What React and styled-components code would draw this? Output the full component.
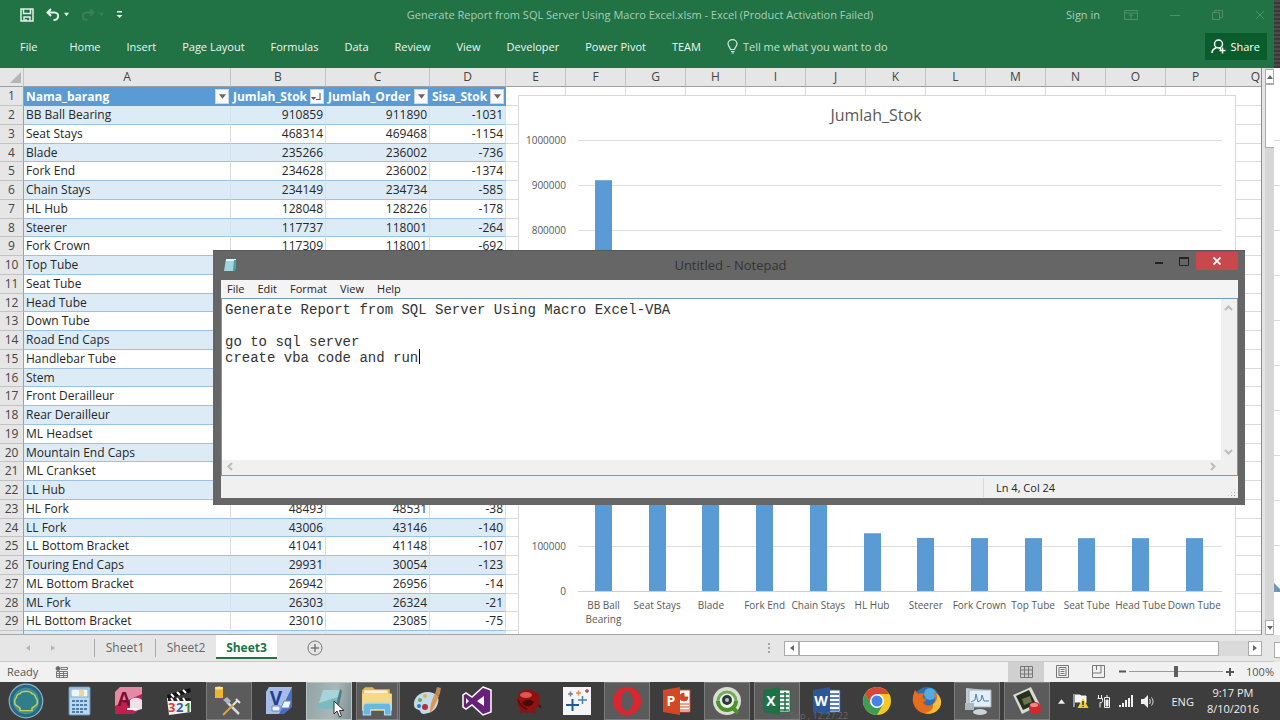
import React from "react";
import styled, { createGlobalStyle, css } from "styled-components";

const GlobalStyle = createGlobalStyle`
  * {
    box-sizing: border-box;
  }
  body {
    margin: 0;
    font-family: "Open Sans", "Noto Sans", sans-serif;
    font-size: 12px;
    color: #262626;
    overflow: hidden;
  }
  button, input, textarea {
    margin: 0;
    padding: 0;
    border: none;
    background: none;
    font: inherit;
    color: inherit;
  }
  a {
    color: inherit;
    text-decoration: none;
  }
  svg {
    display: block;
  }
`;

const Screen = styled.div`
  display: flex;
  flex-direction: column;
  height: 100vh;
`;

const Desktop = styled.div`
  flex: 1;
  min-height: 0;
  display: grid;
  grid-template-columns: minmax(0, 1fr) 6px;
  position: relative;
`;

const Excel = styled.div`
  display: flex;
  flex-direction: column;
  min-height: 0;
`;

// title bar
const TitleBar = styled.header`
  display: grid;
  grid-template-columns: 1fr auto 1fr;
  align-items: center;
  height: 30px;
  padding: 0 0 1px 6px;
  background: #217346;
  color: #a9cdb8;
  font-size: 11px;
`;

const QuickAccess = styled.div`
  display: flex;
  align-items: center;
  gap: 12px;
  padding-left: 14px;
`;

const WindowTools = styled.div`
  display: flex;
  align-items: center;
  justify-content: flex-end;
  gap: 32px;
  padding-right: 9px;
`;

const SignIn = styled.a`
  margin-right: -8px;
`;

const IconButton = styled.button`
  display: flex;
  align-items: center;
  gap: 4px;
`;

const Ribbon = styled.nav`
  display: flex;
  align-items: center;
  gap: 26px;
  height: 38px;
  padding: 0 7px 6px 20px;
  background: #217346;
  color: #eef6f1;
  font-size: 11px;
`;

const FileTab = styled.a`
  margin-right: 6px;
`;

const TellMe = styled.button`
  display: flex;
  align-items: center;
  gap: 5px;
  color: #c6e0d1;
`;

const ShareButton = styled.button`
  display: flex;
  align-items: center;
  gap: 4px;
  height: 27px;
  margin-left: auto;
  padding: 0 7px 0 6px;
  background: #0a5c2c;
  color: #fff;
`;

// sheet
const SheetRow = styled.div`
  flex: 1;
  min-height: 0;
  display: flex;
  background: #e6e6e6;
`;

const SheetView = styled.div`
  flex: 1;
  min-width: 0;
  position: relative;
  overflow: hidden;
  background: #fff;
  border-right: 1px solid #8d8d8d;
  border-bottom: 1px solid #a6a6a6;
`;

const SheetTable = styled.table`
  table-layout: fixed;
  width: 1286px;
  border-collapse: separate;
  border-spacing: 0;
  font-size: 12px;
  line-height: 16px;
  th, td {
    padding: 0 2px;
    overflow: hidden;
    white-space: nowrap;
  }
`;

const ColHead = styled.th`
  height: 19px;
  background: #e6e6e6;
  border-right: 1px solid #c3c3c3;
  border-bottom: 1px solid #9f9f9f;
  color: #444;
  font-weight: 400;
`;

const RowHead = styled.th`
  background: #e6e6e6;
  border-right: 1px solid #9f9f9f;
  border-bottom: 1px solid #c3c3c3;
  color: #444;
  font-weight: 400;
  text-align: center;
`;

const SheetLine = styled.tr`
  height: 19px;
  &:nth-child(4n) {
    height: 18px;
  }
`;

const FieldHead = styled.th`
  background: #5b9bd5;
  border-right: 1px solid #5b9bd5;
  color: #fff;
  font-weight: 700;
  text-align: left;
`;

const FieldInner = styled.div`
  display: flex;
  align-items: center;
  justify-content: space-between;
  margin-right: -1px;
`;

const FilterButton = styled.button`
  flex: none;
  display: flex;
  align-items: center;
  justify-content: center;
  width: 14px;
  height: 15px;
  background: #fafafa;
  border: 1px solid #d0d7de;
`;

const DataCell = styled.td`
  background: ${(p) => (p.$band ? "#ddebf7" : "#fff")};
  border-right: 1px solid ${(p) => (p.$band ? "#d5e3f0" : "#dcdcdc")};
  border-bottom: 1px solid #9bc2e6;
  text-align: ${(p) => (p.$num ? "right" : "left")};
`;

const BlankCell = styled.td`
  border-right: 1px solid #dadada;
  border-bottom: 1px solid #dadada;
`;

const ChartBox = styled.figure`
  position: absolute;
  left: 518px;
  top: 27px;
  margin: 0;
  background: #fff;
  border: 1px solid #d9d9d9;
`;

const VScroll = styled.div`
  width: 12px;
  padding: 1px 0 0 3px;
  display: flex;
  flex-direction: column;
  background: linear-gradient(90deg, #e4e4e4 3px, #d6d6d6 3px);
`;

const ScrollButton = styled.button`
  display: flex;
  align-items: center;
  justify-content: center;
  width: ${(p) => p.$w}px;
  height: 15px;
  background: #fff;
  border: 1px solid #ababab;
`;

const VThumb = styled.div`
  height: 64px;
  background: #fff;
  border: 1px solid #ababab;
  border-right: none;
`;

// sheet tabs
const TabBar = styled.div`
  display: flex;
  align-items: center;
  height: 27px;
  background: #e6e6e6;
  border-bottom: 1px solid #c8c8c8;
  color: #666;
`;

const TabArrows = styled.div`
  display: flex;
  justify-content: space-between;
  width: 94px;
  padding: 0 38px 0 25px;
`;

const SheetTab = styled.button`
  width: 61px;
  height: 18px;
  border-left: 1px solid #ababab;
  line-height: 18px;
  ${(p) =>
    p.$active &&
    css`
      align-self: flex-start;
      height: 24px;
      padding-top: 3px;
      background: #fff;
      border-left: none;
      border-bottom: 2px solid #217346;
      color: #217346;
      font-weight: 700;
    `}
`;

const AddSheet = styled.button`
  margin-left: 30px;
`;

const HScroll = styled.div`
  display: flex;
  align-items: center;
  width: 494px;
  margin: 0 12px 0 auto;
`;

const HThumb = styled.div`
  width: 420px;
  height: 15px;
  background: #fff;
  border: 1px solid #ababab;
`;

const HTrack = styled.div`
  flex: 1;
  height: 15px;
  background: #dadada;
`;

const Grip = styled.div`
  width: 2px;
  height: 11px;
  margin-right: 14px;
  background: repeating-linear-gradient(#a6a6a6 0 2px, transparent 2px 4px);
`;

const StatusBar = styled.footer`
  display: flex;
  align-items: center;
  gap: 17px;
  height: 20px;
  padding: 0 0 1px 7px;
  background: #f1f1f1;
  color: #555;
  font-size: 11px;
`;

const ViewButton = styled.button`
  display: flex;
  align-items: center;
  justify-content: center;
  width: 36px;
  height: 20px;
  background: ${(p) => (p.$active ? "#d0d0d0" : "transparent")};
`;

const ViewGroup = styled.div`
  display: flex;
  margin-left: auto;
`;

const ZoomGroup = styled.div`
  display: flex;
  align-items: center;
  gap: 3px;
  margin-left: -14px;
  span {
    margin-left: 9px;
  }
`;

const ZoomSlider = styled.input`
  appearance: none;
  width: 94px;
  height: 12px;
  background: linear-gradient(#9a9a9a, #9a9a9a) center / 100% 1px no-repeat;
  &::-webkit-slider-thumb {
    appearance: none;
    width: 4px;
    height: 11px;
    background: #5e5e5e;
  }
`;

// edge of the window that lies behind
const Edge = styled.div`
  display: flex;
  flex-direction: column;
  background: #fff;
`;

const EdgeTop = styled.div`
  height: 68px;
  background: repeating-linear-gradient(#4d4a4a 0 2px, #3b3939 2px 4px);
`;

const EdgeGrid = styled.div`
  flex: 1;
  display: flex;
  align-items: flex-end;
  margin-top: 28px;
  padding-bottom: 43px;
  background: repeating-linear-gradient(transparent 0 44px, #d9d9d9 44px 45px);
`;

const EdgeFoot = styled.div`
  height: 47px;
  padding-top: 7px;
  background: linear-gradient(#e6e6e6 27px, #f1f1f1 27px);
  &::before {
    content: "";
    display: block;
    height: 14px;
    background: #fff;
    border: 1px solid #ababab;
    border-right: none;
  }
`;

// notepad
const Notepad = styled.section`
  position: absolute;
  left: 213px;
  top: 250px;
  width: 1032px;
  height: 255px;
  display: flex;
  flex-direction: column;
  padding: 1px 7px 7px 8px;
  background: #666;
  border-top: 1px solid #585858;
`;

const NoteTitle = styled.div`
  display: grid;
  grid-template-columns: 1fr auto 1fr;
  align-items: center;
  height: 28px;
  padding: 0 0 2px 2px;
  color: #333;
  font-size: 13px;
`;

const NoteButtons = styled.div`
  display: flex;
  align-self: flex-start;
  align-items: center;
  justify-content: flex-end;
  gap: 7px;
`;

const Minimize = styled.button`
  margin-right: 9px;
`;

const CloseButton = styled.button`
  display: flex;
  align-items: center;
  justify-content: center;
  width: 42px;
  height: 18px;
  background: #c8494d;
`;

const NoteMenu = styled.nav`
  display: flex;
  align-items: center;
  gap: 13px;
  height: 18px;
  padding: 0 0 2px 6px;
  background: #f4f4f4;
  font-size: 11px;
`;

const NoteBody = styled.div`
  flex: 1;
  min-height: 0;
  display: grid;
  grid-template-columns: 1fr 16px;
  grid-template-rows: 1fr 15px;
  position: relative;
  border: 1px solid #6c9dc6;
  background: #f0f0f0;
`;

const NoteText = styled.textarea`
  resize: none;
  outline: none;
  overflow: hidden;
  padding: 3px 3px;
  background: #fff;
  color: #333;
  font-family: "Liberation Mono", monospace;
  font-size: 14px;
  line-height: 16px;
`;

const Caret = styled.div`
  position: absolute;
  left: calc(4px + 23ch);
  top: 50px;
  width: 1px;
  height: 15px;
  background: #000;
  font-family: "Liberation Mono", monospace;
  font-size: 14px;
`;

const NoteScroll = styled.div`
  display: flex;
  flex-direction: ${(p) => (p.$vertical ? "column" : "row")};
  align-items: center;
  justify-content: space-between;
  padding: ${(p) => (p.$vertical ? "5px 2px 4px 0" : "0 4px 2px")};
`;

const NoteStatus = styled.div`
  display: flex;
  justify-content: flex-end;
  align-items: center;
  height: 22px;
  background: #f0f0f0;
  font-size: 11px;
  span {
    width: 255px;
    padding: 2px 0 2px 12px;
    border-left: 1px solid #d9d9d9;
  }
`;

const SizeGrip = styled.div`
  align-self: flex-end;
  width: 9px;
  height: 9px;
  margin: 0 2px 1px -11px;
  background: radial-gradient(#a5a5a5 1px, transparent 1px) 0 0 / 3px 3px;
  clip-path: polygon(100% 0, 100% 100%, 0 100%);
`;

// taskbar
const Taskbar = styled.footer`
  display: flex;
  align-items: center;
  gap: 4px;
  height: 38px;
  padding: 0 3px;
  position: relative;
  background: #3d3d3d;
  color: #f0f0f0;
  font-size: 11px;
`;

const TaskButton = styled.button`
  display: flex;
  align-items: center;
  justify-content: center;
  flex: none;
  width: 46px;
  height: 38px;
  ${(p) => p.$start && "margin-right: 3px;"}
  ${(p) => p.$open && "background: #5b5b5b; border: 1px solid #7c7c7c;"}
  ${(p) => p.$stack && "width: 44px; border-right: 3px double #7c7c7c;"}
  ${(p) =>
    p.$focus &&
    "background: linear-gradient(100deg, #93a4a6, #a9b7b8 60%, #7f9092); border: 1px solid #b9c4c5;"}
`;

const Pointer = styled.svg`
  position: absolute;
  left: 333px;
  bottom: 2px;
`;

const Ghost = styled.span`
  position: absolute;
  left: 790px;
  bottom: 0;
  color: #666;
  font-size: 9px;
  line-height: 9px;
`;

const Tray = styled.div`
  display: flex;
  align-items: center;
  gap: 8px;
  margin: 0 18px 0 auto;
`;

const Language = styled.span`
  margin: 0 5px 0 8px;
`;

const Clock = styled.time`
  display: flex;
  flex-direction: column;
  align-items: center;
  line-height: 16px;
`;

const rows = [
  ["BB Ball Bearing", "910859", "911890", "-1031"],
  ["Seat Stays", "468314", "469468", "-1154"],
  ["Blade", "235266", "236002", "-736"],
  ["Fork End", "234628", "236002", "-1374"],
  ["Chain Stays", "234149", "234734", "-585"],
  ["HL Hub", "128048", "128226", "-178"],
  ["Steerer", "117737", "118001", "-264"],
  ["Fork Crown", "117309", "118001", "-692"],
  ["Top Tube"],
  ["Seat Tube"],
  ["Head Tube"],
  ["Down Tube"],
  ["Road End Caps"],
  ["Handlebar Tube"],
  ["Stem"],
  ["Front Derailleur"],
  ["Rear Derailleur"],
  ["ML Headset"],
  ["Mountain End Caps"],
  ["ML Crankset"],
  ["LL Hub"],
  ["HL Fork", "48493", "48531", "-38"],
  ["LL Fork", "43006", "43146", "-140"],
  ["LL Bottom Bracket", "41041", "41148", "-107"],
  ["Touring End Caps", "29931", "30054", "-123"],
  ["ML Bottom Bracket", "26942", "26956", "-14"],
  ["ML Fork", "26303", "26324", "-21"],
  ["HL Bottom Bracket", "23010", "23085", "-75"],
  [""],
];

const letters = "ABCDEFGHIJKLMNOPQ".split("");
const extra = letters.slice(4);
const widths = [24, 207, 95, 104, 76, ...extra.map(() => 60)];
const fields = ["Nama_barang", "Jumlah_Stok", "Jumlah_Order", "Sisa_Stok"];

const bars = [
  [["BB Ball", "Bearing"], 910859],
  [["Seat Stays"], 468314],
  [["Blade"], 235266],
  [["Fork End"], 234628],
  [["Chain Stays"], 234149],
  [["HL Hub"], 128048],
  [["Steerer"], 117737],
  [["Fork Crown"], 117309],
  [["Top Tube"], 117200],
  [["Seat Tube"], 117200],
  [["Head Tube"], 117200],
  [["Down Tube"], 117200],
];

const Arrow = ({ dir = "down", color = "#666", size = 6 }) => {
  const turn = { down: 0, left: 90, up: 180, right: 270 }[dir];
  return (
    <svg width={size} height={size} viewBox="0 0 6 6">
      <path d="M0 1h6L3 5z" fill={color} transform={`rotate(${turn} 3 3)`} />
    </svg>
  );
};

const Chevron = ({ dir }) => {
  const turn = { down: 0, left: 90, up: 180, right: 270 }[dir];
  return (
    <svg width="9" height="9" viewBox="0 0 9 9">
      <path
        d="M1 3l3.500 3.500L8 3"
        fill="none"
        stroke="#bcbcbc"
        strokeWidth="2"
        transform={`rotate(${turn} 4.500 4.500)`}
      />
    </svg>
  );
};

function Chart() {
  const base = 495;
  const scale = 451 / 1000000;
  const ticks = Array.from({ length: 11 }, (_, i) => i * 100000);
  return (
    <ChartBox>
      <svg width="716" height="560" fontSize="10" fill="#595959">
        <text x="357" y="25" fontSize="16" textAnchor="middle">
          Jumlah_Stok
        </text>
        {ticks.map((t) => (
          <g key={t}>
            <path
              d={`M59 ${Math.round(base - t * scale) + 0.5}H703`}
              stroke={t ? "#dedede" : "#cfcfcf"}
            />
            <text x="47" y={Math.round(base - t * scale) + 4} textAnchor="end">
              {t}
            </text>
          </g>
        ))}
        {bars.map(([label, value], i) => {
          const x = 84.5 + i * 53.7;
          return (
            <g key={label[0]}>
              <rect
                x={Math.round(x - 8.5)}
                y={base - value * scale}
                width="17"
                height={value * scale}
                fill="#5b9bd5"
              />
              {label.map((line, n) => (
                <text key={line} x={x} y={513 + n * 14} textAnchor="middle">
                  {line}
                </text>
              ))}
            </g>
          );
        })}
      </svg>
    </ChartBox>
  );
}

function Sheet() {
  return (
    <SheetView>
      <SheetTable>
        <colgroup>
          {widths.map((w, i) => (
            <col key={i} width={w} />
          ))}
        </colgroup>
        <thead>
          <tr>
            <ColHead>
              <svg width="20" height="14" viewBox="0 0 20 14">
                <path d="M19 2v11H8z" fill="#b5b5b5" />
              </svg>
            </ColHead>
            {letters.map((l) => (
              <ColHead key={l}>{l}</ColHead>
            ))}
          </tr>
        </thead>
        <tbody>
          <SheetLine>
            <RowHead>1</RowHead>
            {fields.map((f, i) => (
              <FieldHead key={f}>
                <FieldInner>
                  {f}
                  <FilterButton aria-label={`Filter ${f}`}>
                    {i === 1 ? (
                      <svg width="12" height="10" viewBox="0 0 12 10">
                        <path d="M0 5h5L2.500 8z" fill="#555" />
                        <path
                          d="M9 1v7M5 7.500h4"
                          stroke="#555"
                          fill="none"
                        />
                      </svg>
                    ) : (
                      <Arrow size={7} />
                    )}
                  </FilterButton>
                </FieldInner>
              </FieldHead>
            ))}
            {extra.map((l) => (
              <BlankCell key={l} />
            ))}
          </SheetLine>
          {rows.map(([name, ...nums], r) => (
            <SheetLine key={r}>
              <RowHead>{name && r + 2}</RowHead>
              <DataCell $band={r % 2 === 0}>{name}</DataCell>
              {[0, 1, 2].map((n) => (
                <DataCell key={n} $num $band={r % 2 === 0}>
                  {nums[n]}
                </DataCell>
              ))}
              {extra.map((l) => (
                <BlankCell key={l} />
              ))}
            </SheetLine>
          ))}
        </tbody>
      </SheetTable>
      <Chart />
    </SheetView>
  );
}

const menus = [
  "Home",
  "Insert",
  "Page Layout",
  "Formulas",
  "Data",
  "Review",
  "View",
  "Developer",
  "Power Pivot",
  "TEAM",
];

function ExcelHeader() {
  return (
    <>
      <TitleBar>
        <QuickAccess>
          <IconButton aria-label="Save">
            <svg width="14" height="14" viewBox="0 0 14 14" fill="none" stroke="#e4f1e9" strokeWidth="1.500">
              <path d="M1 1h12v12H1zM3.500 1v4.500h7V1M4 13V9h6v4M6 11v2" />
            </svg>
          </IconButton>
          <IconButton aria-label="Undo">
            <svg width="14" height="14" viewBox="0 0 14 14" fill="none" stroke="#e4f1e9" strokeWidth="2">
              <path d="M5 1L1.500 4.500 5 8M2 4.500h6.500c5 0 5 7.500-1 7.500" />
            </svg>
            <Arrow color="#e4f1e9" size={5} />
          </IconButton>
          <IconButton aria-label="Redo">
            <svg width="14" height="14" viewBox="0 0 14 14" fill="none" stroke="#3a8159" strokeWidth="2">
              <path d="M9 1l3.500 3.500L9 8M12 4.500H5.500c-5 0-5 7.500 1 7.500" />
            </svg>
            <Arrow color="#3a8159" size={5} />
          </IconButton>
          <IconButton aria-label="Customize">
            <svg width="7" height="8" viewBox="0 0 7 8">
              <path d="M1 0h5v1.500H1zM.5 4h6L3.500 7z" fill="#e4f1e9" />
            </svg>
          </IconButton>
        </QuickAccess>
        <span>
          Generate Report from SQL Server Using Macro Excel.xlsm - Excel
          (Product Activation Failed)
        </span>
        <WindowTools>
          <SignIn href="#signin">Sign in</SignIn>
          <svg width="14" height="10" viewBox="0 0 14 10" fill="none" stroke="#4f9069">
            <path d="M.5.5h13v9H.5zM.5 3h13M7 9V4.500M5 6l2-2 2 2" />
          </svg>
          <svg width="10" height="10" viewBox="0 0 10 10" stroke="#4f9069">
            <path d="M0 5.500h10" />
          </svg>
          <svg width="11" height="10" viewBox="0 0 11 10" fill="none" stroke="#4f9069">
            <path d="M.5 2.500h7v7h-7zM2.500 2.500v-2h8v7h-3" />
          </svg>
          <svg width="10" height="10" viewBox="0 0 10 10" stroke="#4f9069">
            <path d="M1 1l8 8M9 1L1 9" />
          </svg>
        </WindowTools>
      </TitleBar>
      <Ribbon>
        <FileTab href="#File">File</FileTab>
        {menus.map((m) => (
          <a key={m} href={`#${m}`}>
            {m}
          </a>
        ))}
        <TellMe>
          <svg width="11" height="15" viewBox="0 0 11 15" fill="none" stroke="#d6eadf" strokeWidth="1.200">
            <path d="M3.500 10.500C3.500 8.500 1 7.500 1 4.800a4.500 4.200 0 0 1 9 0C10 7.500 7.500 8.500 7.500 10.500zM4 12.500h3.500M4.500 14h2.500" />
          </svg>
          Tell me what you want to do
        </TellMe>
        <ShareButton>
          <svg width="15" height="15" viewBox="0 0 15 15" fill="none" stroke="#fff" strokeWidth="1.500">
            <circle cx="7.500" cy="5" r="4" />
            <path d="M1 14c0-3 2-4.500 4.500-5.500M8.500 9l1.500 1.500M11.500 8.500v6M8.500 11.500h6" />
          </svg>
          Share
        </ShareButton>
      </Ribbon>
    </>
  );
}

function ExcelFooter() {
  return (
    <>
      <TabBar>
        <TabArrows>
          <Arrow dir="left" color="#b8b8b8" />
          <Arrow dir="right" color="#b8b8b8" />
        </TabArrows>
        <SheetTab>Sheet1</SheetTab>
        <SheetTab>Sheet2</SheetTab>
        <SheetTab $active>Sheet3</SheetTab>
        <AddSheet aria-label="New sheet">
          <svg width="16" height="16" viewBox="0 0 16 16" fill="none" stroke="#777">
            <circle cx="8" cy="8" r="7" />
            <path d="M8 4v8M4 8h8" strokeWidth="1.500" />
          </svg>
        </AddSheet>
        <HScroll>
          <Grip />
          <ScrollButton $w={15} aria-label="Scroll left">
            <Arrow dir="left" />
          </ScrollButton>
          <HThumb />
          <HTrack />
          <ScrollButton $w={14} aria-label="Scroll right">
            <Arrow dir="right" />
          </ScrollButton>
        </HScroll>
      </TabBar>
      <StatusBar>
        Ready
        <svg width="13" height="12" viewBox="0 0 13 12" fill="none" stroke="#777">
          <circle cx="3" cy="2.500" r="2" fill="#666" />
          <path d="M6 1.500h6.500v2H6zM1.500 5.500h11v6h-11zM1.500 7.500h11M1.500 9.500h11M4.500 5.500v6M8.500 5.500v6" />
        </svg>
        <ViewGroup>
          <ViewButton $active aria-label="Normal">
            <svg width="13" height="12" viewBox="0 0 13 12" fill="none" stroke="#777">
              <path d="M.5.5h12v11H.5zM.5 4h12M.5 8h12M4.500.5v11M8.500.5v11" />
            </svg>
          </ViewButton>
          <ViewButton aria-label="Page layout">
            <svg width="13" height="13" viewBox="0 0 13 13" fill="none" stroke="#777">
              <path d="M.5.5h12v12H.5zM3 2.500h7v8H3zM4.500 4.500h4M4.500 6.500h4M4.500 8.500h4" />
            </svg>
          </ViewButton>
          <ViewButton aria-label="Page break">
            <svg width="13" height="13" viewBox="0 0 13 13" fill="none" stroke="#777">
              <path d="M.5.5h12v12H.5zM.5 8h8.500V.5M4.500.5V5" />
            </svg>
          </ViewButton>
        </ViewGroup>
        <ZoomGroup>
          <svg width="7" height="7" viewBox="0 0 7 7" stroke="#555" strokeWidth="2">
            <path d="M0 3.500h7" />
          </svg>
          <ZoomSlider type="range" aria-label="Zoom" defaultValue={50} />
          <svg width="8" height="8" viewBox="0 0 8 8" stroke="#555" strokeWidth="2">
            <path d="M0 4h8M4 0v8" />
          </svg>
          <span>100%</span>
        </ZoomGroup>
      </StatusBar>
    </>
  );
}

const note =
  "Generate Report from SQL Server Using Macro Excel-VBA\n\ngo to sql server\ncreate vba code and run";

function NotepadWindow() {
  return (
    <Notepad>
      <NoteTitle>
        <svg width="14" height="14" viewBox="0 0 14 14">
          <path d="M3 1h10l-1 12H1z" fill="#9fd6e0" />
          <path d="M3 1h10v2H3z" fill="#e6f4f6" />
          <path d="M11 2h2l-1 11h-2z" fill="#4f9aa8" />
        </svg>
        <span>Untitled - Notepad</span>
        <NoteButtons>
          <Minimize aria-label="Minimize">
            <svg width="8" height="10" viewBox="0 0 8 10">
              <path d="M0 7h8" stroke="#222" strokeWidth="2" />
            </svg>
          </Minimize>
          <svg width="10" height="9" viewBox="0 0 10 9" fill="none" stroke="#222">
            <path d="M.5 1.500h9v7h-9zM0 .5h10" />
          </svg>
          <CloseButton aria-label="Close">
            <svg width="8" height="8" viewBox="0 0 8 8" stroke="#fff" strokeWidth="1.800">
              <path d="M.5.5l7 7M7.500.5l-7 7" />
            </svg>
          </CloseButton>
        </NoteButtons>
      </NoteTitle>
      <NoteMenu>
        {["File", "Edit", "Format", "View", "Help"].map((m) => (
          <a key={m} href={`#note-${m}`}>
            {m}
          </a>
        ))}
      </NoteMenu>
      <NoteBody>
        <NoteText aria-label="Text" spellCheck={false} defaultValue={note} />
        <NoteScroll $vertical>
          <Chevron dir="up" />
          <Chevron dir="down" />
        </NoteScroll>
        <NoteScroll>
          <Chevron dir="left" />
          <Chevron dir="right" />
        </NoteScroll>
        <Caret />
      </NoteBody>
      <NoteStatus>
        <span>Ln 4, Col 24</span>
        <SizeGrip />
      </NoteStatus>
    </Notepad>
  );
}

const Icon = ({ children, size = 30 }) => (
  <svg width={size} height={size} viewBox="0 0 30 30">
    {children}
  </svg>
);

const OfficeIcon = ({ letter, color, children }) => (
  <Icon>
    <path d="M14 4h14v22H14z" fill="#fff" stroke={color} />
    {children}
    <path d="M1 4l17-3v28L1 26z" fill={color} />
    <text x="9" y="20" fontSize="14" fontWeight="700" fill="#fff" textAnchor="middle">
      {letter}
    </text>
  </Icon>
);

const tasks = [
  {
    name: "Start",
    start: true,
    icon: (
      <Icon size={36}>
        <circle cx="15" cy="15" r="14" fill="#24688a" stroke="#8fb3bd" />
        <circle cx="15" cy="15" r="11" fill="#3f8f8d" />
        <path
          d="M10 23v-2l-4-3c-1-3 0-5 1-6 0-2 2-3 3-3 1-2 3-2 5-2s4 0 5 2c1 0 3 1 3 3 1 1 2 3 1 6l-4 3v2z"
          fill="#2f7f8b"
          stroke="#c8cf5a"
          strokeWidth="1.200"
        />
      </Icon>
    ),
  },
  {
    name: "Calculator",
    icon: (
      <Icon>
        <rect x="5" y="1" width="21" height="28" rx="1" fill="#bcd8ee" stroke="#5f93bd" />
        <rect x="7" y="3" width="17" height="8" fill="#eef6fb" stroke="#7aa9cf" />
        <path d="M15 4h5v6h-5z" fill="#f3d58b" />
        <path
          d="M8 15h3M12 15h3M16 15h3M20 15h3M8 19h3M12 19h3M16 19h3M20 19h3M8 23h3M12 23h3M16 23h3M20 23h3M8 26h3M12 26h3M16 26h3"
          stroke="#4c7fae"
          strokeWidth="2"
        />
      </Icon>
    ),
  },
  {
    name: "Access",
    icon: (
      <Icon>
        <path d="M6 1h22v20l-8 7H1V6z" fill="#c1204f" />
        <path d="M6 1h22v7L1 20V6z" fill="#e58aa6" />
        <text x="10" y="20" fontSize="19" fontWeight="700" fill="#7d0f33" textAnchor="middle">
          A
        </text>
        <path d="M16 14c3-3 9-3 12 0v9l-7 2-5-2z" fill="#f3dfe7" />
        <path d="M13 23h10" stroke="#fff" strokeWidth="2" />
      </Icon>
    ),
  },
  {
    name: "Media Player Classic",
    icon: (
      <Icon>
        <path d="M3 12h24v14L5 29z" fill="#f4f4f4" />
        <path d="M3 9l23-7 1 4L4 13z" fill="#111" />
        <path d="M7 8l3 3M13 6l3 3M19 4l3 3" stroke="#fff" strokeWidth="2" />
        <path d="M4 12h23v3H4z" fill="#222" />
        <path d="M7 12l2 3M13 12l2 3M19 12l2 3" stroke="#fff" strokeWidth="2" />
        <text x="4" y="26" fontSize="13" fontWeight="700" fill="#d8432b">3</text>
        <text x="12" y="26" fontSize="13" fontWeight="700" fill="#2f62b5">2</text>
        <text x="20" y="26" fontSize="13" fontWeight="700" fill="#338a3a">1</text>
      </Icon>
    ),
  },
  {
    name: "SQL Server",
    open: true,
    icon: (
      <Icon>
        <path d="M1 1h8v11H1z" fill="#f0b52c" />
        <ellipse cx="5" cy="2" rx="4" ry="1.500" fill="#ffe28a" />
        <path d="M13 16l12 12" stroke="#d3d9de" strokeWidth="2.500" />
        <path d="M9 29l11-11" stroke="#d9a441" strokeWidth="2" />
        <path d="M19 19l5-5M22 13l4 4" stroke="#dfe5e9" strokeWidth="2" />
        <path d="M9 14l4-3 4 4-3 3z" fill="#aeb8c0" />
      </Icon>
    ),
  },
  {
    name: "Visio",
    icon: (
      <Icon>
        <path d="M6 1h22v20l-8 7H2V6z" fill="#4b6cc0" />
        <path d="M5 1h23L15 28H2V6z" fill="#a8bce8" />
        <text x="12" y="19" fontSize="19" fontWeight="700" fill="#23408f" textAnchor="middle">
          V
        </text>
        <path d="M8 20h8v5H8zM20 15h7l-2 7h-8z" fill="#f2f6ff" stroke="#6885cc" />
      </Icon>
    ),
  },
  {
    name: "Notepad",
    focus: true,
    icon: (
      <Icon>
        <path d="M9 4h17l-5 19H3z" fill="#7cb9c1" />
        <path d="M9 4h17l-2 7L5 17z" fill="#a6d4d8" />
        <path d="M26 3l2 2-4 20-3-2z" fill="#567b80" />
      </Icon>
    ),
  },
  {
    name: "Explorer",
    open: true,
    stack: true,
    icon: (
      <Icon size={32}>
        <path d="M1 5l3-3h7l2 2h14v20H1z" fill="#e3bb55" />
        <path d="M3 5h22v3H3z" fill="#fbf3d8" />
        <path d="M1 8h28v16H1z" fill="#f5d984" />
        <path d="M5 17h20c2 0 3 2 3 4v7h-6v-5H9v5H2v-7c0-2 1-4 3-4z" fill="#6cb7e2" stroke="#a9dcf3" />
      </Icon>
    ),
  },
  {
    name: "Paint",
    icon: (
      <Icon>
        <path d="M2 19C1 11 9 5 17 6c7 1 11 5 9 11-2 8-8 10-14 11-4 0-3-3-5-4-3-1-5-2-5-5z" fill="#bfdced" />
        <circle cx="8" cy="14" r="2" fill="#68a84c" />
        <circle cx="13" cy="10" r="2" fill="#e5b43b" />
        <circle cx="7" cy="20" r="2" fill="#2f79bd" />
        <circle cx="13" cy="21" r="3" fill="#b3323a" />
        <path d="M18 27c0-8 2-14 5-19l4 2c-3 6-5 13-9 17z" fill="#dd9852" />
        <path d="M23 8l2-7 4 1-1 5-1 3z" fill="#b98a5c" />
      </Icon>
    ),
  },
  {
    name: "Visual Studio",
    icon: (
      <Icon>
        <path d="M21 1l8 3v22l-8 3L10 19l-6 4-3-2V9l3-2 6 4z" fill="#68217a" stroke="#fff" strokeWidth="1.500" />
        <path d="M22 10v10l-7-5zM4 12v6l3-3z" fill="#fff" />
      </Icon>
    ),
  },
  {
    name: "Red tool",
    icon: (
      <Icon>
        <path d="M5 5l4 1c5-4 13-3 16 2l1-3 1 5c2 5-1 12-5 14l2 4-5-2c-2 1-5 1-7 0l-5 2 2-4c-3-2-4-6-3-9l-4-1 4-2c0-2 1-4 2-5z" fill="#8f1212" />
        <ellipse cx="14" cy="9" rx="6" ry="3" fill="#dd5650" />
        <path d="M10 17c3-4 9-4 12-1-2 5-8 6-12 1z" fill="#4a0809" />
        <path d="M27 19l2 3M6 14c2 5 5 8 9 9" stroke="#5d0c0c" strokeWidth="2" fill="none" />
      </Icon>
    ),
  },
  {
    name: "Tableau",
    icon: (
      <Icon>
        <path d="M1 1h28v28H1z" fill="#f5f5f7" />
        <path d="M4 19h13M10.500 13v12" stroke="#1f5a94" strokeWidth="2" />
        <path d="M16 14h9M20.500 10v8" stroke="#4f83a8" strokeWidth="1.500" />
        <path d="M6 8h5M8.500 5.500v5" stroke="#7a7e95" strokeWidth="1.500" />
        <path d="M14 7h5M16.500 4.500v5" stroke="#e1924a" strokeWidth="1.500" />
        <path d="M23 5h4M25 3v4" stroke="#b04a5f" strokeWidth="1.500" />
      </Icon>
    ),
  },
  {
    name: "Opera",
    open: true,
    icon: (
      <Icon>
        <ellipse cx="15" cy="15" rx="14" ry="14" fill="#dd2530" />
        <ellipse cx="15" cy="15" rx="6" ry="10" fill="#5b5b5b" />
      </Icon>
    ),
  },
  {
    name: "PowerPoint",
    icon: (
      <OfficeIcon letter="P" color="#d24726">
        <path d="M22 7a4 4 0 1 0 4 4h-4zM18 18h9M18 21h9M18 24h9" fill="#d24726" stroke="#d24726" />
      </OfficeIcon>
    ),
  },
  {
    name: "QlikView",
    open: true,
    icon: (
      <Icon>
        <circle cx="15" cy="15" r="14" fill="#d9ddd6" />
        <circle cx="15" cy="15" r="9" fill="#eef2ee" stroke="#76ab55" strokeWidth="3" />
        <path d="M6 15a9 9 0 0 0 18 0" fill="none" stroke="#4d9226" strokeWidth="4" />
        <circle cx="15" cy="14" r="5" fill="#2c383d" />
        <circle cx="15" cy="14" r="2" fill="#b8c5cc" />
        <path d="M20 21l6 6" stroke="#4d9226" strokeWidth="4" />
      </Icon>
    ),
  },
  {
    name: "Excel",
    open: true,
    icon: (
      <OfficeIcon letter="X" color="#1e7145">
        <path d="M18 8h9M18 12h9M18 16h9M18 20h9M18 24h9M23 6v19" stroke="#1e7145" strokeWidth="1.500" />
      </OfficeIcon>
    ),
  },
  {
    name: "Word",
    icon: (
      <OfficeIcon letter="W" color="#2b579a">
        <path d="M18 8h9M18 12h9M18 16h9M18 20h9M18 24h9" stroke="#2b579a" strokeWidth="1.500" />
      </OfficeIcon>
    ),
  },
  {
    name: "Chrome",
    icon: (
      <Icon>
        <circle cx="15" cy="15" r="14" fill="#f6c927" />
        <path d="M2.900 8A14 14 0 0 1 27.100 8H15L9 18.500z" fill="#d9453a" />
        <path d="M2.900 8A14 14 0 0 0 15 29l6-10.500L9 18.500z" fill="#3b9e54" />
        <circle cx="15" cy="15" r="7" fill="#fff" />
        <circle cx="15" cy="15" r="5.500" fill="#4583e6" />
      </Icon>
    ),
  },
  {
    name: "Firefox",
    icon: (
      <Icon>
        <circle cx="15" cy="14" r="13" fill="#2c6fb4" />
        <circle cx="18" cy="8" r="6" fill="#55aadf" />
        <path d="M3 4l3 4c2-1 5-1 7 0-3 1-3 4 0 5 2 0 1 3-2 3 1 4 7 5 11 1 2-4 1-8-1-11 6 3 8 8 8 12-3 14-25 13-28-2C0 11 2 7 3 4z" fill="#e66d1d" />
        <path d="M21 18c5-3 5-9 2-12 4 3 7 7 6 12-2 8-10 11-16 9 6-1 9-5 8-9z" fill="#f8bf3a" />
      </Icon>
    ),
  },
  {
    name: "Performance",
    open: true,
    icon: (
      <Icon>
        <path d="M4 2l20 2v15l-20 2z" fill="#c3ccd1" />
        <path d="M7 4h22v17H7z" fill="#e4eef4" stroke="#a4b0b7" />
        <path d="M9 16l4-2 1-6 2 8 3-2 1-5 2 6h5" stroke="#4483b8" fill="none" />
        <path d="M3 17h9v7H3z" fill="#aeb7bb" />
        <ellipse cx="18" cy="26" rx="7" ry="3" fill="#cdd3d6" />
      </Icon>
    ),
  },
  {
    name: "Recorder",
    open: true,
    icon: (
      <Icon>
        <path d="M1 9L19 1l9 18-18 9z" fill="#d7dad6" />
        <path d="M4 10l13-6 7 14-13 6z" fill="#26301f" />
        <path d="M10 13l8-3 2 6-8 3z" fill="#6b7550" />
        <circle cx="23" cy="22" r="6" fill="#d9262b" />
        <ellipse cx="22" cy="19" rx="4" ry="2" fill="#f08a84" />
      </Icon>
    ),
  },
];

function TrayIcons() {
  return (
    <>
      <Arrow dir="up" color="#f0f0f0" size={7} />
      <svg width="16" height="15" viewBox="0 0 16 15">
        <path d="M1 0v13M2 1h5l1 1h5v7H8L7 8H2" fill="#f4f4f4" stroke="#f4f4f4" />
        <path d="M10 4l5.500 10h-11z" fill="#f4cf1f" />
        <path d="M10 7v4M10 12v1" stroke="#333" strokeWidth="1.500" />
      </svg>
      <svg width="14" height="15" viewBox="0 0 14 15" fill="none" stroke="#f0f0f0">
        <path d="M7.500 3.500h5v10h-5zM9 2h2M1.500 1v3M4.500 1v3M.5 4.500h5v2c0 2-1 2-2.500 2v5" />
        <path d="M9 6h2v6H9z" fill="#f0f0f0" />
      </svg>
      <svg width="14" height="12" viewBox="0 0 14 12" fill="#f0f0f0">
        <path d="M0 10h2v2H0zM3 8h2v4H3zM6 5h2v7H6zM9 3h2v9H9zM12 0h2v12h-2z" />
      </svg>
      <svg width="14" height="13" viewBox="0 0 14 13" fill="none" stroke="#f0f0f0">
        <path d="M0 4h3l4-4v13L3 9H0z" fill="#f0f0f0" stroke="none" />
        <path d="M8.500 4c1 1.500 1 3.500 0 5M10.500 2.500c2 2.500 2 5.500 0 8" />
      </svg>
    </>
  );
}

function App() {
  return (
    <Screen>
      <GlobalStyle />
      <Desktop>
        <Excel>
          <ExcelHeader />
          <SheetRow>
            <Sheet />
            <VScroll>
              <ScrollButton $w={9} aria-label="Scroll up">
                <Arrow dir="up" />
              </ScrollButton>
              <VThumb />
              <div style={{ flex: 1 }} />
              <ScrollButton $w={9} aria-label="Scroll down">
                <Arrow />
              </ScrollButton>
            </VScroll>
          </SheetRow>
          <ExcelFooter />
        </Excel>
        <Edge>
          <EdgeTop />
          <EdgeGrid>
            <svg width="6" height="9" viewBox="0 0 6 9">
              <path d="M0 0l6 6v3H0z" fill="#6f95b8" />
            </svg>
          </EdgeGrid>
          <EdgeFoot />
        </Edge>
        <NotepadWindow />
      </Desktop>
      <Taskbar>
        {tasks.map((t) => (
          <TaskButton
            key={t.name}
            aria-label={t.name}
            $start={t.start}
            $open={t.open}
            $stack={t.stack}
            $focus={t.focus}
          >
            {t.icon}
          </TaskButton>
        ))}
        <Ghost>Sep , 12:27:22</Ghost>
        <Tray>
          <TrayIcons />
          <Language>ENG</Language>
          <Clock>
            <span>9:17 PM</span>
            <span>8/10/2016</span>
          </Clock>
        </Tray>
        <Pointer width="12" height="18" viewBox="0 0 12 18">
          <path d="M1 1v13l3-3 2.500 6 2-1L6.500 10.500H11z" fill="#fff" stroke="#333" />
        </Pointer>
      </Taskbar>
    </Screen>
  );
}

export default App;
